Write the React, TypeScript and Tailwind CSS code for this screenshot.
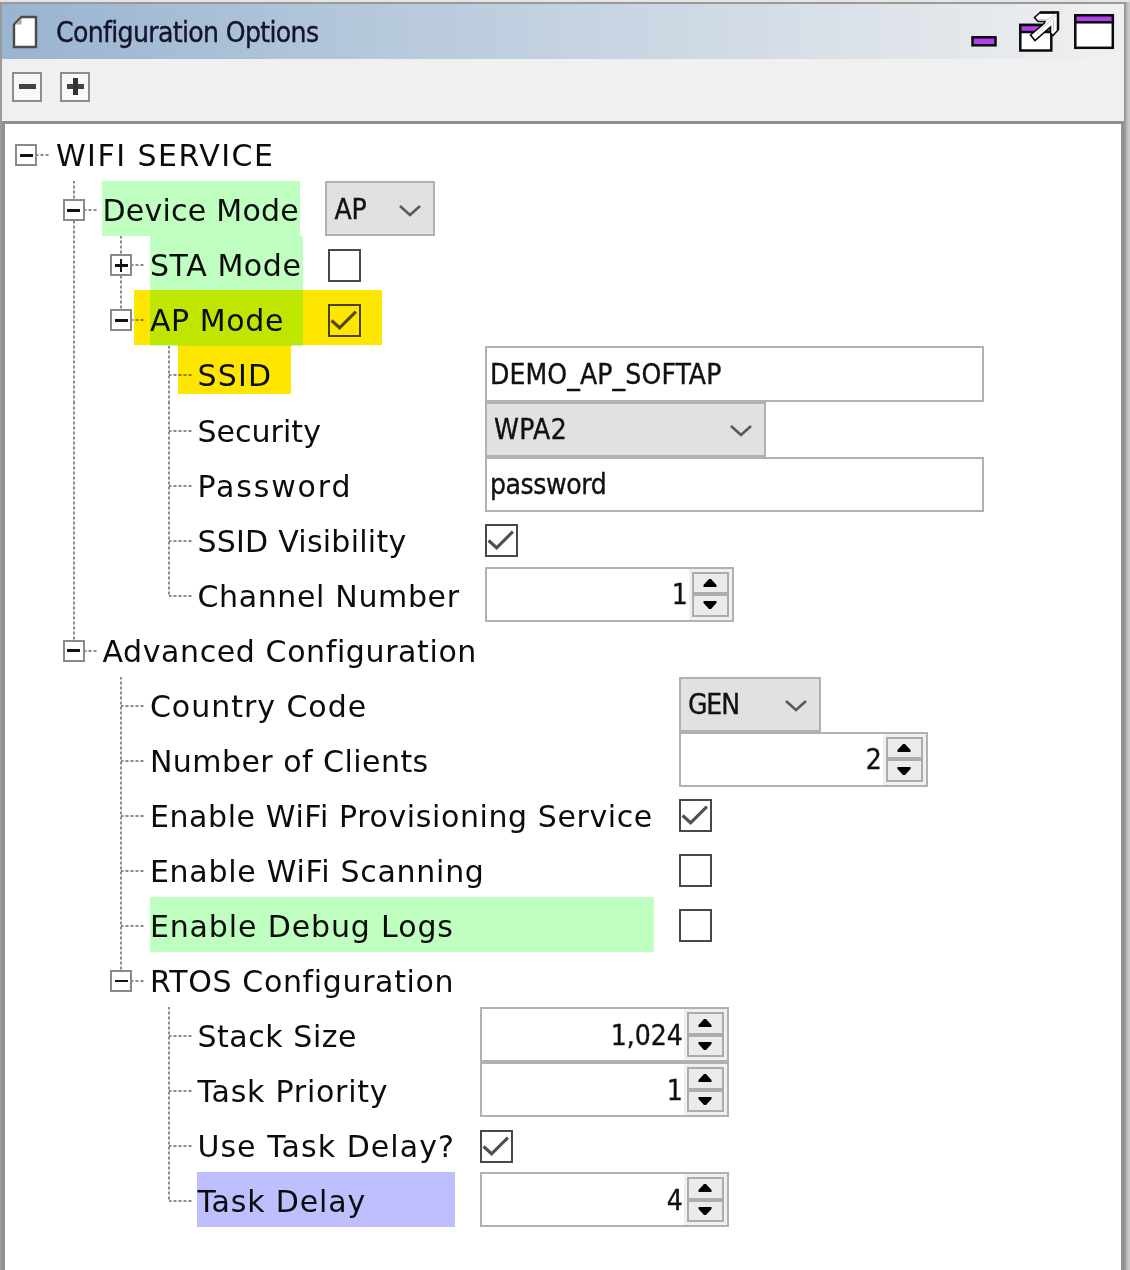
import React from "react";

type Control =
  | { kind: "select"; value: string; width: string; tracking?: string }
  | { kind: "text"; value: string; tracking: string }
  | { kind: "check"; checked: boolean }
  | { kind: "spin"; value: string };

type Row = {
  label: string;
  tracking: string;
  depth: number;
  toggle?: "minus" | "plus";
  /** depths whose vertical guide runs through the whole row */
  through?: number[];
  /** depths whose vertical guide stops at the middle of the row */
  ends?: number;
  labelWidth?: string;
  fill?: string;
  mark?: string;
  control?: Control;
};

const ROWS: Row[] = [
  { label: "WIFI SERVICE", tracking: "tracking-[1.5px]", depth: 0, toggle: "minus", labelWidth: "pl-[1px]" },
  { label: "Device Mode", tracking: "tracking-[0.25px]", depth: 1, toggle: "minus", through: [1], labelWidth: "w-[198px]", fill: "bg-[#bfffbf]", control: { kind: "select", value: "AP", width: "w-[110px]" } },
  { label: "STA Mode", tracking: "tracking-[0.6px]", depth: 2, toggle: "plus", through: [1, 2], labelWidth: "w-[152.7px]", fill: "bg-[#bfffbf]", control: { kind: "check", checked: false } },
  { label: "AP Mode", tracking: "tracking-[0.6px]", depth: 2, toggle: "minus", through: [1], ends: 2, labelWidth: "w-[152.7px]", fill: "bg-[#bfffbf]", mark: "left-[129px] w-[248px] -top-[1px] h-[55px]", control: { kind: "check", checked: true } },
  { label: "SSID", tracking: "tracking-[1.2px]", depth: 3, through: [1, 3], labelWidth: "w-[262.5px]", mark: "left-[173px] w-[113px] -top-[1px] h-[49px]", control: { kind: "text", value: "DEMO_AP_SOFTAP", tracking: "tracking-[0.12px]" } },
  { label: "Security", tracking: "tracking-[0.05px]", depth: 3, through: [1, 3], labelWidth: "w-[262.5px]", control: { kind: "select", value: "WPA2", width: "w-[281px]", tracking: "tracking-[0.4px]" } },
  { label: "Password", tracking: "tracking-[1.85px]", depth: 3, through: [1, 3], labelWidth: "w-[262.5px]", control: { kind: "text", value: "password", tracking: "tracking-[-0.4px]" } },
  { label: "SSID Visibility", tracking: "tracking-[0.25px]", depth: 3, through: [1, 3], labelWidth: "w-[262.5px]", control: { kind: "check", checked: true } },
  { label: "Channel Number", tracking: "tracking-[0.65px]", depth: 3, through: [1], ends: 3, labelWidth: "w-[262.5px]", control: { kind: "spin", value: "1" } },
  { label: "Advanced Configuration", tracking: "tracking-[0.61px]", depth: 1, toggle: "minus", ends: 1 },
  { label: "Country Code", tracking: "tracking-[0.98px]", depth: 2, through: [2], labelWidth: "w-[504px]", control: { kind: "select", value: "GEN", width: "w-[142px]", tracking: "tracking-[-1.1px]" } },
  { label: "Number of Clients", tracking: "tracking-[0.46px]", depth: 2, through: [2], labelWidth: "w-[504px]", control: { kind: "spin", value: "2" } },
  { label: "Enable WiFi Provisioning Service", tracking: "tracking-[0.6px]", depth: 2, through: [2], labelWidth: "w-[504px]", control: { kind: "check", checked: true } },
  { label: "Enable WiFi Scanning", tracking: "tracking-[0.72px]", depth: 2, through: [2], labelWidth: "w-[504px]", control: { kind: "check", checked: false } },
  { label: "Enable Debug Logs", tracking: "tracking-[0.87px]", depth: 2, through: [2], labelWidth: "w-[504px]", fill: "bg-[#bfffbf]", control: { kind: "check", checked: false } },
  { label: "RTOS Configuration", tracking: "tracking-[0.65px]", depth: 2, toggle: "minus", ends: 2 },
  { label: "Stack Size", tracking: "tracking-[0.55px]", depth: 3, through: [3], labelWidth: "w-[257.5px]", control: { kind: "spin", value: "1,024" } },
  { label: "Task Priority", tracking: "tracking-[0.76px]", depth: 3, through: [3], labelWidth: "w-[257.5px]", control: { kind: "spin", value: "1" } },
  { label: "Use Task Delay?", tracking: "tracking-[1.05px]", depth: 3, through: [3], labelWidth: "w-[257.5px]", control: { kind: "check", checked: true } },
  { label: "Task Delay", tracking: "tracking-[0.83px]", depth: 3, ends: 3, labelWidth: "w-[257.5px]", fill: "bg-[#bfbfff]", control: { kind: "spin", value: "4" } },
];

const CONTROL_FONT = "font-['DejaVu_Sans_Condensed','DejaVu_Sans',sans-serif] text-[28px] [-webkit-text-stroke:0.35px_currentColor]";
const DOTS_Y = "bg-[repeating-linear-gradient(to_bottom,#8c8c8c_0px,#8c8c8c_2px,#fafafa_3px,#fafafa_4px,#8c8c8c_5px)]";
const DOTS_X = "bg-[repeating-linear-gradient(to_right,#8c8c8c_0px,#8c8c8c_2px,#fafafa_3px,#fafafa_4px,#8c8c8c_5px)]";

function Toggle({ plus }: { plus: boolean }) {
  return (
    <span className="absolute left-[10px] top-[18px] flex h-[22px] w-[22px] items-center justify-center border-2 border-[#8a8a8a] bg-white">
      <span className="h-[2.5px] w-[13px] bg-[#111]" />
      {plus && <span className="absolute h-[13px] w-[2.5px] bg-[#111]" />}
    </span>
  );
}

function Indent({ row }: { row: Row }) {
  return (
    <>
      {Array.from({ length: row.depth + 1 }, (_, d) => (
        <span key={d} className="relative h-full w-[47.5px] shrink-0">
          {row.through?.includes(d) && <span className={`absolute left-[20px] top-0 h-full w-[2px] ${DOTS_Y}`} />}
          {row.ends === d && <span className={`absolute left-[20px] top-0 h-[29px] w-[2px] ${DOTS_Y}`} />}
          {d === row.depth && <span className={`absolute left-[21px] top-[28px] h-[2px] w-[23px] ${DOTS_X}`} />}
          {d === row.depth && row.toggle && <Toggle plus={row.toggle === "plus"} />}
        </span>
      ))}
    </>
  );
}

function Checkbox({ checked }: { checked: boolean }) {
  return (
    <span className="mt-[3px] h-[33px] w-[33px] border-[2.5px] border-[#484848] bg-white">
      {checked && (
        <svg viewBox="0 0 28 28" className="h-full w-full" fill="none" stroke="#505050" strokeWidth="3">
          <path d="M1.5 14L9.3 21L25 5.5" />
        </svg>
      )}
    </span>
  );
}

function Select({ value, width, tracking = "" }: { value: string; width: string; tracking?: string }) {
  return (
    <span className={`flex h-full items-center justify-between border-[2px] border-[#b0b0b6] bg-[#e1e1e1] pl-[7px] pr-[12px] text-[#111] ${CONTROL_FONT} ${width}`}>
      <span className={`pt-[2px] ${tracking}`}>{value}</span>
      <svg viewBox="0 0 22 12" className="mt-[4px] h-[12px] w-[22px]" fill="none" stroke="#5a5a5a" strokeWidth="2.6">
        <path d="M1 1L11 10L21 1" />
      </svg>
    </span>
  );
}

function Arrow({ up }: { up: boolean }) {
  return (
    <svg viewBox="0 0 14 8" className="h-[8px] w-[14px]">
      <path d={up ? "M6 0H8L13.5 6V8H0.5V6Z" : "M0.5 0H13.5V2L8 8H6L0.5 2Z"} />
    </svg>
  );
}

function Spinner({ value }: { value: string }) {
  return (
    <span className={`flex h-full w-[249px] border-[2px] border-[#b0b0b6] bg-[#f0f0f0] ${CONTROL_FONT}`}>
      <span className="flex flex-1 items-center justify-end bg-white pt-[2px] pr-[1px] text-[#111]">{value}</span>
      <span className="mx-[3px] my-[3px] flex w-[37px] flex-col border-[2px] border-[#acacac] bg-[#ebebeb]">
        <span className="flex flex-1 items-center justify-center border-b-2 border-[#acacac]"><Arrow up /></span>
        <span className="flex flex-1 items-center justify-center border-t-2 border-[#acacac]"><Arrow up={false} /></span>
      </span>
    </span>
  );
}

function ControlView({ control }: { control: Control }) {
  switch (control.kind) {
    case "check":
      return <Checkbox checked={control.checked} />;
    case "select":
      return <Select value={control.value} width={control.width} tracking={control.tracking} />;
    case "spin":
      return <Spinner value={control.value} />;
    case "text":
      return (
        <span className={`flex h-full w-[499px] items-center border-[2px] border-[#b0b0b6] bg-white pl-[3px] pt-[2px] text-[#111] ${CONTROL_FONT} ${control.tracking}`}>
          {control.value}
        </span>
      );
  }
}

function TreeRow({ row }: { row: Row }) {
  return (
    <div className="relative flex h-[55.06px] items-center">
      <Indent row={row} />
      <span className={`ml-[2.4px] h-full whitespace-nowrap text-[30px] leading-[60px] text-[#0c0c0c] ${row.tracking} ${row.labelWidth ?? ""} ${row.fill ?? ""}`}>
        {row.label}
      </span>
      {row.control && (
        <span className="ml-[25px] flex h-full items-center">
          <ControlView control={row.control} />
        </span>
      )}
      {row.mark && <span className={`absolute bg-[#ffe600] mix-blend-multiply ${row.mark}`} />}
    </div>
  );
}

function ToolButton({ plus }: { plus: boolean }) {
  return (
    <button className="relative flex h-[30px] w-[30px] items-center justify-center border-[2.5px] border-[#8c8c8c] bg-[#f8f8f8]">
      <span className="h-[5px] w-[17px] bg-[#444]" />
      {plus && <span className="absolute h-[17px] w-[5px] bg-[#333]" />}
    </button>
  );
}

function TitleBar() {
  return (
    <header className="flex h-[55px] items-center bg-linear-to-r from-[#99b4d1] to-[#f0f0f0] pl-[10px]">
      <svg viewBox="0 0 26 34" className="h-[34px] w-[26px]">
        <path d="M9.5 2H24V32H2V9.5Z" fill="#fff" stroke="#4a4a4a" strokeWidth="2.4" />
        <path d="M9.5 3V9.5H3Z" fill="#a8a8a8" />
      </svg>
      <span className={`ml-[18px] pt-[2px] tracking-[-0.65px] text-[#14142a] ${CONTROL_FONT}`}>Configuration Options</span>
      <svg viewBox="970 10 146 44" className="ml-auto mr-[8px] h-[44px] w-[146px]" stroke="#0a0a0a" strokeWidth="2.5">
        <rect x="972.5" y="37.3" width="23" height="8" fill="#b040f0" />
        <rect x="1020.3" y="25" width="31" height="25.5" fill="#fff" />
        <rect x="1020.3" y="25" width="31" height="7" fill="#b040f0" />
        <path d="M1040 12.5H1058V30L1053 35.5L1050.5 33V27L1035 40.5L1030.5 35L1044 23.5L1045 21.5H1038L1034.5 17.5Z" fill="#fff" stroke="#0a0a0a" strokeWidth="1.6" />
        <path d="M1040 12.5H1058V30" fill="none" />
        <path d="M1039 19.5H1048L1054 14.5M1056 15.5L1037 33.5M1053.5 20V31" fill="none" stroke="#c8c8c8" strokeWidth="1" />
        <rect x="1075.3" y="15.3" width="37.5" height="32.5" fill="#fff" />
        <rect x="1075.3" y="15.3" width="37.5" height="7" fill="#b040f0" />
      </svg>
    </header>
  );
}

export default function App() {
  return (
    <div className="flex h-[1270px] w-[1130px] flex-col overflow-hidden bg-[#e4e4e4] pt-[2px] font-['DejaVu_Sans',sans-serif]">
      <div className="flex min-h-0 flex-1 bg-linear-to-r from-[#b4b4b4] from-[1126px] to-[#d0d0d0]">
        <div className="flex w-[1126px] flex-col border-x-2 border-t-2 border-[#9a9a9a]">
          <TitleBar />
          <div className="flex h-[62px] items-center gap-[18px] bg-[#f0f0f0] pb-[7px] pl-[10px]">
            <ToolButton plus={false} />
            <ToolButton plus />
          </div>
          <main className="min-h-0 flex-1 border-x-[3px] border-t-[3px] border-[#8c9099] bg-white pt-[2.3px]">
            {ROWS.map((row) => (
              <TreeRow key={row.label} row={row} />
            ))}
          </main>
        </div>
      </div>
    </div>
  );
}
